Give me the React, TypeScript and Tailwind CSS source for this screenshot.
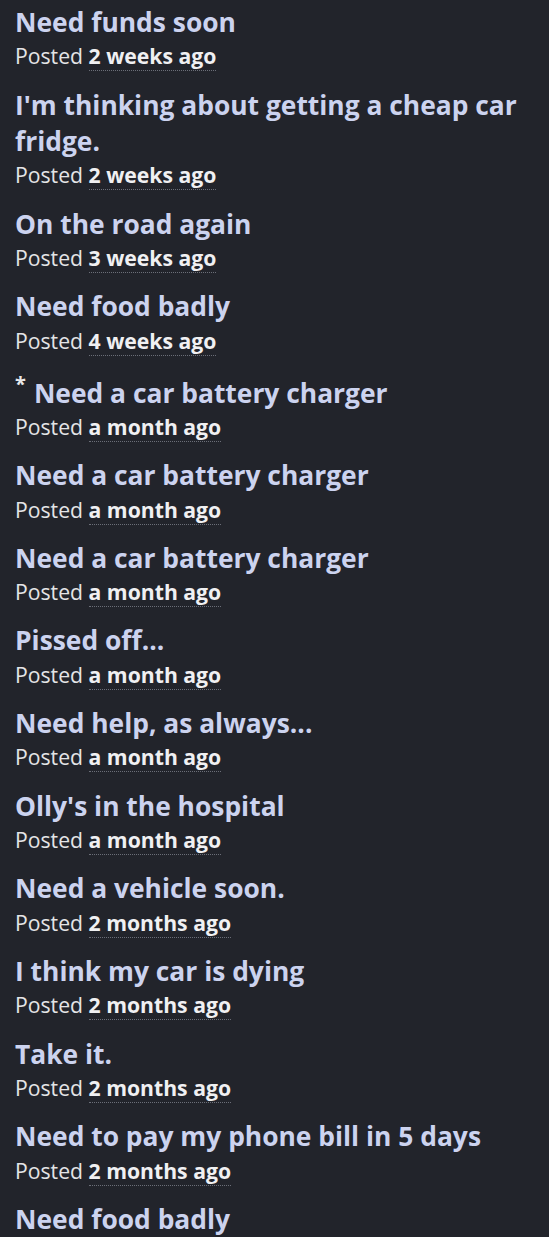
const posts: { title: string; when: string; star?: boolean }[] = [
  { title: "Need funds soon", when: "2 weeks ago" },
  { title: "I'm thinking about getting a cheap car fridge.", when: "2 weeks ago" },
  { title: "On the road again", when: "3 weeks ago" },
  { title: "Need food badly", when: "4 weeks ago" },
  { title: "Need a car battery charger", when: "a month ago", star: true },
  { title: "Need a car battery charger", when: "a month ago" },
  { title: "Need a car battery charger", when: "a month ago" },
  { title: "Pissed off...", when: "a month ago" },
  { title: "Need help, as always...", when: "a month ago" },
  { title: "Olly's in the hospital", when: "a month ago" },
  { title: "Need a vehicle soon.", when: "2 months ago" },
  { title: "I think my car is dying", when: "2 months ago" },
  { title: "Take it.", when: "2 months ago" },
  { title: "Need to pay my phone bill in 5 days", when: "2 months ago" },
  { title: "Need food badly", when: "2 months ago" },
];

export default function App() {
  return (
    <div className="h-[1237px] overflow-hidden bg-[#22242b] pl-[15px] pr-4 pt-1 font-['Open_Sans',sans-serif]">
      <ul className="flex flex-col gap-[15px]">
        {posts.map((post, i) => (
          <li key={i}>
            <h2 className="text-[26.4px] font-bold leading-[36.4px] text-[#ccd3ef]">
              {post.star && (
                <sup className="relative top-[-2px] mr-[8px] align-super text-[20px] font-bold leading-normal text-[#e8e8ea]">
                  *
                </sup>
              )}
              {post.title}
            </h2>
            <p className="text-[21.2px] leading-[31.2px] text-[#e4e4e6]">
              Posted{" "}
              <span className="border-b border-dotted border-[#6b6e78] font-bold text-[#f0f0f2]">
                {post.when}
              </span>
            </p>
          </li>
        ))}
      </ul>
    </div>
  );
}
